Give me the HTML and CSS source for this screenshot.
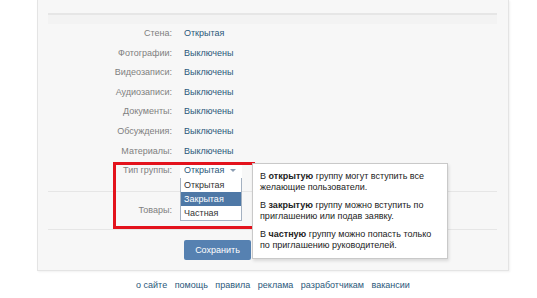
FILE: index.html
```html
<!DOCTYPE html>
<html lang="ru">
<head>
  <meta charset="UTF-8">
  <title>Настройки сообщества</title>
  <link rel="stylesheet" href="styles.css">
</head>
<body>
  <div class="card">
    <div class="card-head"></div>
    <div class="card-band"></div>

    <div class="settings">
      <div class="row"><span class="label">Стена:</span><a class="value">Открытая</a></div>
      <div class="row"><span class="label">Фотографии:</span><a class="value">Выключены</a></div>
      <div class="row"><span class="label">Видеозаписи:</span><a class="value">Выключены</a></div>
      <div class="row"><span class="label">Аудиозаписи:</span><a class="value">Выключены</a></div>
      <div class="row"><span class="label">Документы:</span><a class="value">Выключены</a></div>
      <div class="row"><span class="label">Обсуждения:</span><a class="value">Выключены</a></div>
      <div class="row"><span class="label">Материалы:</span><a class="value">Выключены</a></div>
      <div class="row">
        <span class="label">Тип группы:</span>
        <div class="select">
          <div class="select-box">Открытая<span class="arrow"></span></div>
          <ul class="select-list">
            <li>Открытая</li>
            <li class="active">Закрытая</li>
            <li>Частная</li>
          </ul>
        </div>
      </div>
    </div>

    <div class="sep"></div>
    <div class="row"><span class="label">Товары:</span></div>
    <div class="sep sep-low"></div>

    <div class="actions">
      <button class="btn">Сохранить</button>
    </div>

    <!-- highlight and hint over the form -->
    <div class="highlight"></div>
    <div class="hint">
      <p>В <b>открытую</b> группу могут вступить все желающие пользователи.</p>
      <p>В <b>закрытую</b> группу можно вступить по приглашению или подав заявку.</p>
      <p>В <b>частную</b> группу можно попасть только по приглашению руководителей.</p>
    </div>
  </div>

  <div class="footer">
    <a>о сайте</a>
    <a>помощь</a>
    <a>правила</a>
    <a>реклама</a>
    <a>разработчикам</a>
    <a>вакансии</a>
  </div>
</body>
</html>
```

FILE: styles.css
```css
/* page */
body {
  margin: 0;
  padding: 0;
  background-color: #fff;
  font-family: 'Liberation Sans', Arial, sans-serif;
  font-size: 9px;
  color: #000;
}

a {
  color: #2b587a;
  text-decoration: none;
  cursor: pointer;
}

.card {
  position: relative;
  margin-left: 37px;
  width: 470px;
  padding-bottom: 10px;
  background-color: #f7f7f7;
  border: 1px solid #e4e4e4;
  border-top: none;
  box-shadow: 1px 1px 2px rgba(0,0,0,0.06);
}

.card-head {
  height: 13px;
  margin: 0 11px 0 10px;
  border-bottom: 2px solid #e6e6e6;
}

.card-band {
  height: 9px;
  margin: 0 11px 0 10px;
  background-color: #f3f3f3;
}

.row {
  display: flex;
  align-items: flex-start;
  gap: 12px;
  height: 19.6px;
  line-height: 19.6px;
}

.label {
  width: 134px;
  text-align: right;
  color: #808080;
}

.sep {
  height: 1px;
  margin: 10px 11px 9px 10px;
  background-color: #e6e6e6;
}

.sep-low {
  margin-top: 9px;
  margin-bottom: 10px;
}

/* select */
.select {
  position: relative;
  margin-left: -4px;
  margin-top: 2px;
  width: 62px;
}

.select-box {
  position: relative;
  height: 15px;
  line-height: 15px;
  padding-left: 4px;
  background-color: #fff;
  color: #2b587a;
}

.arrow {
  position: absolute;
  right: 6px;
  top: 6px;
  border-left: 3px solid transparent;
  border-right: 3px solid transparent;
  border-top: 3px solid #8b9db3;
}

.select-list {
  position: absolute;
  top: 100%;
  left: 0;
  width: 62px;
  margin: 0;
  padding: 0;
  list-style: none;
  background-color: #fff;
  border: 1px solid #a4b1c1;
  border-top: none;
  box-sizing: border-box;
}

.select-list li {
  height: 14px;
  line-height: 14px;
  padding-left: 3px;
  color: #333;
}

.select-list li.active {
  background-color: #4e78a6;
  color: #fff;
}

/* button */
.actions {
  padding-left: 146px;
}

.btn {
  width: 67px;
  height: 20px;
  padding: 0;
  border: none;
  border-radius: 2px;
  background-color: #5681b1;
  color: #fff;
  font-family: inherit;
  font-size: 9px;
  cursor: pointer;
}

/* overlays */
.highlight {
  position: absolute;
  left: 75px;
  top: 162px;
  width: 136px;
  height: 61px;
  border: 3px solid #e3121c;
}

.hint {
  position: absolute;
  left: 214px;
  top: 163px;
  width: 180px;
  height: 84px;
  padding: 5px 7px;
  background-color: #fff;
  border: 1px solid #c9c9c9;
  box-shadow: 1px 2px 3px rgba(0,0,0,0.12);
  line-height: 11px;
  color: #222;
}

.hint p {
  margin: 2px 0 7px 0;
}

.footer {
  margin-left: 37px;
  width: 472px;
  padding-top: 7px;
  text-align: center;
  line-height: 14px;
}

.footer a {
  margin: 0 2.5px;
}
```
